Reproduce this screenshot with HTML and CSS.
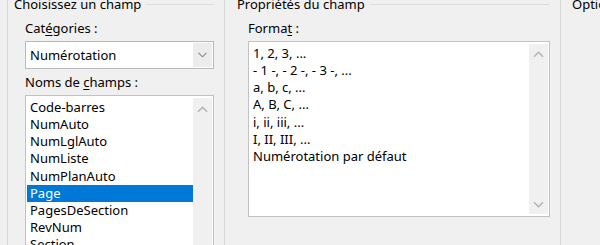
FILE: index.html
```html
<!DOCTYPE html>
<html lang="fr">
<head>
  <meta charset="UTF-8" />
  <title>Champs</title>
  <link rel="stylesheet" href="styles.css">
</head>
<body>
  <div class="dialog">
    <section class="group group-choose">
      <div class="group-title"><span>Choisissez un champ</span><i class="rule"></i></div>
      <div class="group-body">
        <label class="caption">Cat<u>é</u>gories :</label>
        <div class="combo">
          <span class="combo-value">Numérotation</span>
          <span class="combo-btn">
            <svg width="9" height="6" viewBox="0 0 9 6"><path d="M0.5 0.8 L4.5 4.8 L8.5 0.8" fill="none" stroke="#8a8a8a" stroke-width="1.1"/></svg>
          </span>
        </div>
        <label class="caption">Noms de <u>c</u>hamps :</label>
        <div class="listbox listbox-fields">
          <ul class="items">
            <li>Code-barres</li>
            <li>NumAuto</li>
            <li>NumLglAuto</li>
            <li>NumListe</li>
            <li>NumPlanAuto</li>
            <li class="selected">Page</li>
            <li>PagesDeSection</li>
            <li>RevNum</li>
            <li>Section</li>
          </ul>
          <div class="scrollbar">
            <svg class="arrow" width="11" height="7" viewBox="0 0 11 7"><path d="M1 5.8 L5.5 1.3 L10 5.8" fill="none" stroke="#b4b4b4" stroke-width="1.6"/></svg>
          </div>
        </div>
      </div>
    </section>

    <section class="group group-props">
      <div class="group-title"><span>Propriétés du champ</span><i class="rule"></i></div>
      <div class="group-body">
        <label class="caption">Forma<u>t</u> :</label>
        <div class="listbox listbox-format">
          <ul class="items">
            <li>1, 2, 3, ...</li>
            <li>- 1 -, - 2 -, - 3 -, ...</li>
            <li>a, b, c, ...</li>
            <li>A, B, C, ...</li>
            <li>i, ii, iii, ...</li>
            <li>I, II, III, ...</li>
            <li>Numérotation par défaut</li>
          </ul>
          <div class="scrollbar">
            <svg class="arrow" width="11" height="7" viewBox="0 0 11 7"><path d="M1 5.8 L5.5 1.3 L10 5.8" fill="none" stroke="#b4b4b4" stroke-width="1.6"/></svg>
            <svg class="arrow" width="11" height="7" viewBox="0 0 11 7"><path d="M1 1.2 L5.5 5.7 L10 1.2" fill="none" stroke="#b4b4b4" stroke-width="1.6"/></svg>
          </div>
        </div>
      </div>
    </section>

    <section class="group group-options">
      <div class="group-title"><span>Options</span></div>
    </section>
  </div>
</body>
</html>
```

FILE: styles.css
```css
html, body {
  margin: 0;
  height: 100%;
  overflow: hidden;
}
body {
  background: #f0f0f0;
  color: #000;
  font-family: "Segoe UI", "Noto Sans", "Open Sans", sans-serif;
  font-size: 13px;
}
.dialog {
  display: flex;
  margin-top: -4px;
  padding-left: 7px;
  height: 260px;
}
.group {
  flex-shrink: 0;
  border-left: 1px solid #d6d6d6;
  box-sizing: border-box;
}
.group-choose {
  width: 217px;
  padding: 0 10px 0 6px;
}
.group-props {
  width: 336px;
  padding: 0 10px 0 12px;
}
.group-options {
  flex: 1 1 0;
  min-width: 0;
  overflow: hidden;
  padding-left: 11px;
}
.group-title {
  display: flex;
  align-items: center;
  line-height: 17px;
  height: 17px;
  white-space: nowrap;
}
.rule {
  flex: 1;
  height: 1px;
  margin: 0 0 0 5px;
  background: #dcdcdc;
}
.group-props .rule {
  margin-right: 1px;
}
.group-body {
  padding-left: 11px;
}
.caption {
  display: block;
  line-height: 17px;
  margin-top: 7px;
}
.caption u {
  text-underline-offset: 2px;
}
.combo {
  display: flex;
  height: 28px;
  margin-top: 4px;
  background: #fff;
  border: 1px solid #b9b9b9;
  box-sizing: border-box;
}
.combo-value {
  flex: 1;
  padding-left: 4px;
  line-height: 26px;
}
.combo-btn {
  width: 19px;
  margin: 1px;
  background: #ececec;
  display: flex;
  align-items: center;
  justify-content: center;
}
.group-choose .caption + .listbox {
  margin-top: 4px;
}
.group-choose .combo + .caption {
  margin-top: 5px;
}
.listbox {
  display: flex;
  background: #fff;
  border: 1px solid #c2c2c2;
  box-sizing: border-box;
}
.listbox-fields {
  height: 170px;
}
.listbox-format {
  height: 176px;
  margin-top: 4px;
}
.items {
  flex: 1;
  list-style: none;
  margin: 0;
  padding: 3px 0 0 1px;
}
.items li {
  line-height: 17.15px;
  height: 17.15px;
  padding-left: 3px;
  white-space: nowrap;
}
.items li.selected {
  background: #0078d7;
  color: #fff;
}
.scrollbar {
  width: 19px;
  margin: 2px 1px 2px 0;
  background: #f0f0f0;
  display: flex;
  flex-direction: column;
  justify-content: space-between;
  align-items: center;
  padding: 7px 0 6px;
  box-sizing: border-box;
}
.listbox-fields .scrollbar {
  justify-content: flex-start;
  padding-top: 8px;
}
```
